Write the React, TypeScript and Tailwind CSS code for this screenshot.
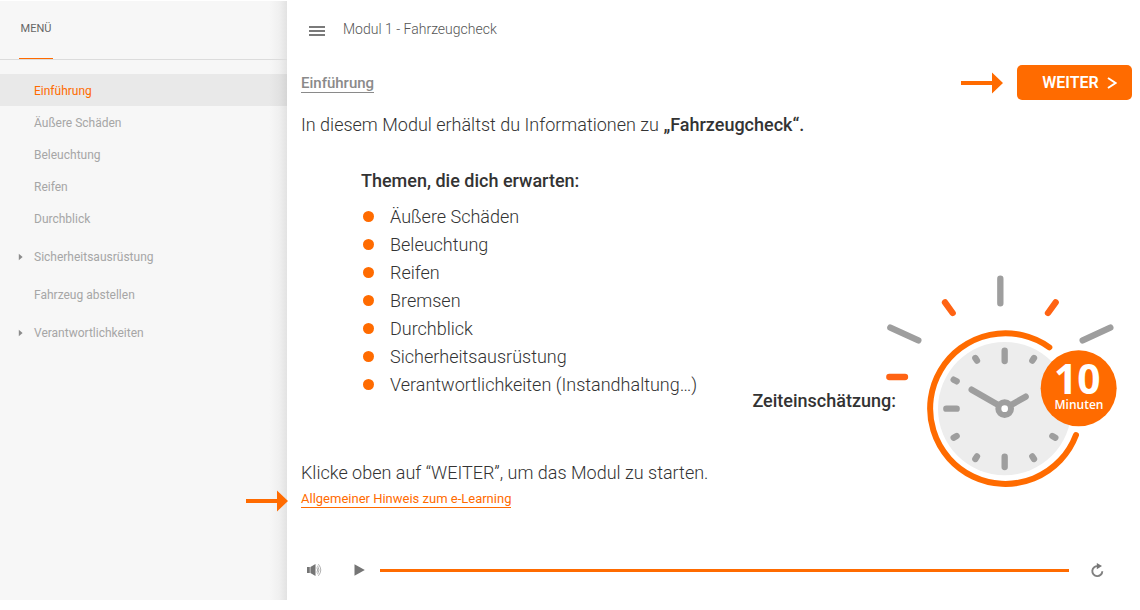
import React from "react";

type MenuEntry = { label: string; tall?: boolean; expandable?: boolean; active?: boolean };

const menu: MenuEntry[] = [
  { label: "Einführung", active: true },
  { label: "Äußere Schäden" },
  { label: "Beleuchtung" },
  { label: "Reifen" },
  { label: "Durchblick" },
  { label: "Sicherheitsausrüstung", tall: true, expandable: true },
  { label: "Fahrzeug abstellen" },
  { label: "Verantwortlichkeiten", tall: true, expandable: true },
];

const topics = [
  "Äußere Schäden",
  "Beleuchtung",
  "Reifen",
  "Bremsen",
  "Durchblick",
  "Sicherheitsausrüstung",
  "Verantwortlichkeiten (Instandhaltung…)",
];

function Arrow() {
  return (
    <svg viewBox="0 0 42 22" className="h-[22px] w-[42px] shrink-0" fill="#ff6b00" aria-hidden="true">
      <path d="M0 9H31V0.500L42 11L31 21.500V13H0Z" />
    </svg>
  );
}

function Sidebar() {
  return (
    <aside className="mt-px mb-[10px] w-[287px] shrink-0 bg-[linear-gradient(to_left,#e2e2e2,#f0f0f0_8px,#f7f7f7_18px)]">
      <div className="flex h-[59px] border-b border-[#dcdcdc] pl-[19px]">
        <div className="flex w-[34px] flex-col">
          <h2 className="flex flex-1 items-center justify-center text-[11px] text-[#666]">MENÜ</h2>
          <span className="h-px bg-[#ff6b00]" />
        </div>
      </div>
      <nav aria-label="Menü" className="pt-[14px]">
        <ul>
          {menu.map((m) => (
            <li key={m.label} className={m.active ? "bg-black/[0.055]" : ""}>
              <a
                href="#"
                className={
                  "flex items-center pt-px pl-[17px] text-[12px] " +
                  (m.tall ? "h-[44px] " : "h-8 ") +
                  (m.active ? "text-[#ff6b00]" : "text-[#a6a6a6]")
                }
              >
                <span className="flex w-[17px]">
                  {m.expandable && (
                    <svg viewBox="0 0 5 8" className="ml-px h-2 w-[5px]" fill="#8c8c8c" aria-hidden="true">
                      <path d="M0.800 0.800L4.600 4L0.800 7.200Z" />
                    </svg>
                  )}
                </span>
                {m.label}
              </a>
            </li>
          ))}
        </ul>
      </nav>
    </aside>
  );
}

function Clock() {
  return (
    <svg
      viewBox="12 24 708 648"
      className="h-[216px] w-[236px] shrink-0"
      fill="none"
      strokeLinecap="round"
      role="img"
      aria-label="10 Minuten"
    >
      <circle cx="374" cy="431" r="200" fill="#ededed" />
      <path d="M508 247A226 226 0 1 0 588 510" stroke="#ff6b00" strokeWidth="18" />
      <g stroke="#9e9e9e" strokeWidth="19">
        <path d="M361 41V115M31 188L115 226M691 188L608 226" />
        <path d="M374 257V288M374 575V606M199 431H230" />
        <path d="M286 279L291 287M462 279L457 287M221 344L230 349M221 518L230 513M517 513L526 518M286 582L291 574M462 582L457 574" />
        <path d="M275 374L374 431L437 395" />
      </g>
      <g stroke="#ff6313" strokeWidth="19">
        <path d="M195 112L218 144M527 112L504 144M28 336H75" />
      </g>
      <circle cx="374" cy="431" r="19" fill="#fff" stroke="#9e9e9e" strokeWidth="18" />
      <circle cx="596" cy="370" r="114" fill="#ff6b00" />
      <g fill="#fff" textAnchor="middle" fontFamily="'Open Sans', sans-serif">
        <text x="592" y="387" fontSize="122" fontWeight="700">10</text>
        <text x="597" y="432" fontSize="36" fontWeight="600">Minuten</text>
      </g>
    </svg>
  );
}

function Player() {
  return (
    <div className="flex h-10 items-center pr-7 pl-5">
      <button type="button" aria-label="Lautstärke" className="mr-8">
        <svg viewBox="0 0 15 14" className="h-[14px] w-[15px]" fill="none" aria-hidden="true">
          <path d="M0 4H2.800V10H0ZM3.400 4L8.500 1V13L3.400 10Z" fill="#757575" />
          <path d="M9.800 4.500Q11.600 7 9.800 9.500M10.600 2.800Q13.400 7 10.600 11.200M11.400 1.200Q16.200 7 11.400 12.800" stroke="#a8a8a8" strokeWidth="0.900" />
        </svg>
      </button>
      <button type="button" aria-label="Wiedergabe" className="mr-[15px]">
        <svg viewBox="0 0 11 12" className="h-3 w-[11px]" fill="#757575" aria-hidden="true">
          <path d="M0.500 0.200L10.800 6L0.500 11.800Z" />
        </svg>
      </button>
      <div role="progressbar" aria-label="Fortschritt" aria-valuenow={100} className="h-[3px] flex-1 bg-[#ff6b00]" />
      <button type="button" aria-label="Wiederholen" className="ml-[22px]">
        <svg viewBox="0 0 13 15" className="h-[15px] w-[13px]" fill="none" aria-hidden="true">
          <path d="M7 3.200A5 5 0 1 0 11.300 8.200" stroke="#808080" strokeWidth="1.900" />
          <path d="M5.800 0L11 3.100L5.800 6.300Z" fill="#757575" />
        </svg>
      </button>
    </div>
  );
}

export default function App() {
  return (
    <div className="flex min-h-screen bg-white font-['Roboto',sans-serif]">
      <Sidebar />
      <main className="flex min-w-0 flex-1 flex-col pr-2 pb-5">
        <header className="flex h-[58px] items-center pl-[22px]">
          <button type="button" aria-label="Menü umschalten">
            <svg viewBox="0 0 16 10" className="mt-1 h-[10px] w-4" fill="#7a7a7a" aria-hidden="true">
              <path d="M0 0H16V2H0ZM0 4H16V6H0ZM0 8H16V10H0Z" />
            </svg>
          </button>
          <h1 className="ml-[18px] text-[14px] font-light text-[#555]">Modul 1 - Fahrzeugcheck</h1>
        </header>

        <div className="mt-[7px] flex items-center pl-[14px]">
          <h2 className="mt-[3px] border-b border-b-[#8a8a8a] text-[15px] leading-[17px] font-medium text-[#8a8a8a]">
            Einführung
          </h2>
          <div className="ml-auto flex items-center gap-[14px]">
            <Arrow />
            <button
              type="button"
              className="flex h-[35px] w-[115px] items-center justify-center gap-2 rounded-[5px] bg-[#ff6b00] pl-[10px] text-[16px] font-semibold text-white"
            >
              WEITER
              <svg viewBox="0 0 10 12" className="h-3 w-[10px]" fill="none" stroke="#fff" strokeWidth="2" aria-hidden="true">
                <path d="M1 1L8.500 6L1 11" />
              </svg>
            </button>
          </div>
        </div>

        <div className="flex pl-[14px] text-[18px] leading-7 text-[#333]">
          <section className="min-w-0 flex-1 pt-[11px]">
            <p className="font-light whitespace-nowrap">
              In diesem Modul erhältst du Informationen zu <strong className="font-medium">„Fahrzeugcheck“.</strong>
            </p>
            <div className="mt-7 pl-[60px]">
              <h3 className="font-medium">Themen, die dich erwarten:</h3>
              <ul className="mt-2 font-light">
                {topics.map((t) => (
                  <li key={t} className="flex items-center">
                    <span className="mr-4 mb-0.5 ml-0.5 size-[11px] rounded-full bg-[#ff6b00]" />
                    {t}
                  </li>
                ))}
              </ul>
            </div>
            <p className="mt-[60px] font-light">Klicke oben auf “WEITER”, um das Modul zu starten.</p>
            <div className="relative flex">
              <div className="absolute top-[3px] -left-[55px]">
                <Arrow />
              </div>
              <a href="#" className="mt-1 border-b border-b-[#ff6b00] text-[13px] leading-4 text-[#ff6b00]">
                Allgemeiner Hinweis zum e-Learning
              </a>
            </div>
          </section>
          <aside className="flex pt-[173px] pr-3">
            <p className="-mr-3 pt-[114px] font-medium">Zeiteinschätzung:</p>
            <Clock />
          </aside>
        </div>

        <div className="mt-auto">
          <Player />
        </div>
      </main>
    </div>
  );
}
